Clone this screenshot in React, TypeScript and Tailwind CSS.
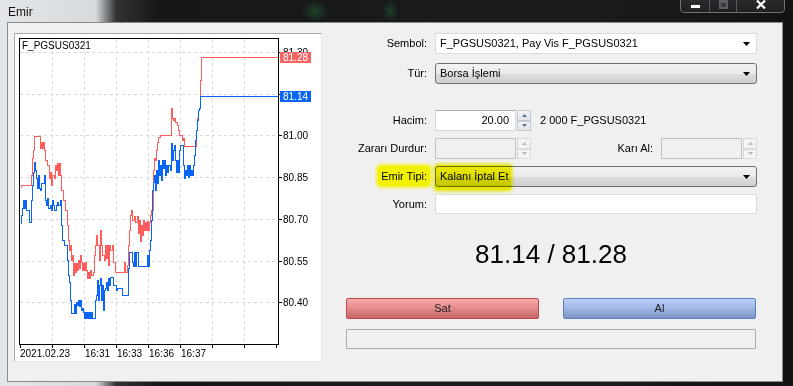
import React from 'react';

type Pt = [number, number];

// ask (red) and bid (blue) tick series, in page pixels of the chart panel
const ASK: Pt[] = [
  [20, 187], [21, 185], [31, 185], [31, 175], [32, 158], [33, 150], [34, 136], [40, 136], [40, 148], [41, 142],
  [42, 148], [43, 142], [44, 150], [45, 160], [47, 165], [49, 178], [50, 172], [51, 185], [52, 175], [54, 178],
  [55, 165], [56, 170], [57, 163], [58, 175], [59, 163], [60, 175], [61, 190], [63, 200], [65, 210], [67, 225],
  [68, 240], [69, 250], [70, 245], [71, 260], [72, 255], [73, 275], [74, 263], [75, 272], [76, 263], [77, 270],
  [78, 260], [79, 268], [80, 255], [81, 262], [82, 270], [83, 263], [84, 270], [85, 262], [86, 270], [87, 278],
  [88, 272], [89, 278], [90, 270], [91, 275], [93, 272], [94, 255], [95, 245], [96, 235], [97, 245], [99, 260],
  [100, 230], [101, 245], [102, 255], [104, 260], [105, 245], [106, 258], [107, 245], [108, 265], [109, 245],
  [110, 250], [112, 245], [113, 262], [115, 272], [124, 272], [124, 262], [125, 272], [127, 265], [128, 245],
  [129, 230], [130, 215], [131, 210], [132, 220], [134, 216], [135, 222], [137, 216], [138, 233], [139, 220],
  [140, 241], [141, 225], [142, 235], [143, 220], [144, 230], [145, 222], [146, 230], [147, 221], [148, 230],
  [149, 222], [150, 215], [151, 210], [153, 170], [154, 158], [155, 160], [156, 150], [157, 142], [158, 137],
  [160, 135], [170, 135], [171, 108], [172, 118], [173, 120], [174, 118], [175, 122], [177, 125], [178, 130],
  [179, 135], [181, 135], [182, 140], [183, 138], [184, 146], [186, 146], [195, 146], [196, 130], [197, 118],
  [198, 110], [199, 108], [200, 80], [201, 57], [278, 57],
];

const BID: Pt[] = [
  [20, 223], [21, 215], [22, 208], [23, 200], [24, 208], [25, 200], [26, 210], [28, 210], [29, 222], [31, 222],
  [31, 200], [32, 185], [33, 172], [34, 162], [35, 170], [36, 178], [37, 188], [38, 175], [39, 188], [40, 190],
  [41, 183], [43, 183], [44, 175], [45, 200], [46, 205], [47, 198], [48, 208], [50, 205], [51, 210], [52, 200],
  [53, 205], [54, 210], [56, 205], [57, 202], [58, 205], [60, 200], [61, 225], [62, 240], [64, 245], [66, 245],
  [67, 260], [68, 275], [69, 282], [70, 300], [71, 313], [73, 313], [74, 304], [75, 313], [76, 302], [77, 305],
  [78, 300], [79, 306], [80, 300], [81, 310], [82, 308], [83, 312], [84, 318], [85, 312], [86, 318], [87, 312],
  [88, 318], [89, 312], [90, 318], [91, 312], [92, 318], [94, 318], [95, 300], [96, 295], [97, 280], [98, 300],
  [99, 285], [100, 278], [101, 300], [102, 285], [103, 310], [104, 290], [105, 288], [106, 282], [107, 290],
  [108, 278], [109, 285], [110, 277], [112, 277], [113, 285], [115, 285], [116, 290], [117, 288], [121, 288],
  [122, 295], [128, 295], [128, 268], [129, 252], [131, 252], [132, 262], [133, 266], [134, 252], [135, 266],
  [136, 252], [138, 266], [146, 266], [147, 255], [148, 266], [149, 250], [150, 240], [151, 220], [152, 190],
  [153, 182], [154, 175], [155, 190], [156, 170], [157, 183], [158, 160], [159, 175], [160, 165], [161, 180],
  [162, 160], [163, 168], [164, 160], [165, 175], [166, 165], [167, 172], [168, 165], [170, 170], [171, 143],
  [172, 160], [173, 150], [174, 145], [175, 160], [176, 172], [177, 160], [178, 172], [179, 150], [180, 145],
  [182, 145], [183, 165], [184, 178], [185, 170], [186, 175], [187, 165], [188, 177], [189, 165], [190, 175],
  [191, 170], [192, 175], [193, 165], [194, 155], [195, 140], [196, 130], [197, 120], [198, 110], [199, 108],
  [200, 96], [278, 96],
];

const stepPath = (pts: Pt[]) => {
  let d = `M${pts[0][0] + 0.5} ${pts[0][1] + 0.5}`;
  for (let i = 1; i < pts.length; i++) {
    d += `H${pts[i][0] + 0.5}V${pts[i][1] + 0.5}`;
  }
  return d;
};

const GRID_Y = [52, 94, 135, 177, 219, 261, 302];
const GRID_X = [52, 84, 116, 148, 180, 212, 244];
const PRICES: [string, number][] = [
  ['81.00', 135],
  ['80.85', 177],
  ['80.70', 219],
  ['80.55', 261],
  ['80.40', 302],
];
const TIMES: [string, number][] = [
  ['2021.02.23', 20],
  ['16:31', 85],
  ['16:33', 117],
  ['16:36', 149],
  ['16:37', 181],
];

const Chart: React.FC = () => (
  <svg width={306} height={327} viewBox="15 34 306 327" className="block">
    <g stroke="#d9d9d9" strokeDasharray="3 3" shapeRendering="crispEdges">
      {GRID_Y.map((y) => (
        <line key={y} x1={20} x2={278} y1={y + 0.5} y2={y + 0.5} />
      ))}
      {GRID_X.map((x) => (
        <line key={x} x1={x + 0.5} x2={x + 0.5} y1={39} y2={344} />
      ))}
    </g>
    <text x={22} y={49} fontSize={10} fontFamily="Liberation Sans, Arial, sans-serif" fill="#000">
      F_PGSUS0321
    </text>
    <path d={stepPath(ASK)} fill="none" stroke="#ff5c5c" strokeWidth={1} shapeRendering="crispEdges" />
    <path d={stepPath(BID)} fill="none" stroke="#0a64f5" strokeWidth={1} shapeRendering="crispEdges" />
    <rect x={19.5} y={38.5} width={259} height={306} fill="none" stroke="#000" shapeRendering="crispEdges" />
    <g stroke="#000" shapeRendering="crispEdges">
      {GRID_Y.map((y) => (
        <line key={y} x1={278} x2={282} y1={y + 0.5} y2={y + 0.5} />
      ))}
      {[20, ...GRID_X, 276].map((x) => (
        <line key={x} x1={x + 0.5} x2={x + 0.5} y1={344} y2={348} />
      ))}
    </g>
    <g fontSize={10} fontFamily="Liberation Sans, Arial, sans-serif" fill="#000">
      <text x={283} y={56}>81.30</text>
      {PRICES.map(([t, y]) => (
        <text key={t} x={283} y={y + 4}>
          {t}
        </text>
      ))}
      {TIMES.map(([t, x]) => (
        <text key={t} x={x} y={357}>
          {t}
        </text>
      ))}
    </g>
    <rect x={280} y={52} width={31} height={11} fill="#f86464" />
    <rect x={280} y={91} width={31} height={11} fill="#0a64f5" />
    <g fontSize={10} fontFamily="Liberation Sans, Arial, sans-serif" fill="#fff">
      <text x={283} y={61}>81.28</text>
      <text x={283} y={100}>81.14</text>
    </g>
  </svg>
);

const Arrow: React.FC = () => (
  <svg width="7" height="4" viewBox="0 0 7 4">
    <path d="M0 0H7L3.5 4Z" fill="#000" />
  </svg>
);

const Spinner: React.FC<{ disabled?: boolean }> = ({ disabled }) => {
  const tri = disabled ? '#b9b9b9' : '#56708f';
  const half = disabled
    ? 'flex-1 flex items-center justify-center border border-[#d9d9d9] bg-[#f3f3f3]'
    : 'flex-1 flex items-center justify-center border border-[#c3cad3] bg-[linear-gradient(#f2f4f7,#dfe5ec)]';
  return (
    <div className="ml-[1px] flex h-[21px] w-[14px] flex-col">
      <div className={half}>
        <svg width="5" height="3" viewBox="0 0 5 3">
          <path d="M0 3H5L2.5 0Z" fill={tri} />
        </svg>
      </div>
      <div className={half}>
        <svg width="5" height="3" viewBox="0 0 5 3">
          <path d="M0 0H5L2.5 3Z" fill={tri} />
        </svg>
      </div>
    </div>
  );
};

const Row: React.FC<{ label: React.ReactNode; children: React.ReactNode; className?: string }> = ({
  label,
  children,
  className,
}) => (
  <div className={`flex items-center ${className ?? ''}`}>
    <div className="w-[113px] pr-[8px] text-right">{label}</div>
    <div className="flex w-[322px] items-center">{children}</div>
  </div>
);

const comboGray =
  'relative flex h-[21px] w-full items-center justify-between rounded-[3px] border border-[#707070] bg-[linear-gradient(#f2f2f2_0%,#ebebeb_50%,#dddddd_51%,#cfcfcf_100%)] pl-[4px] pr-[6px]';

const App: React.FC = () => {
  return (
    <div className="relative h-[386px] w-[793px] overflow-hidden bg-[linear-gradient(90deg,#e3e6e9_0px,#d6dadd_96px,#303234_116px,#161718_160px,#1b1c1d_560px,#121314_100%)] font-['Liberation_Sans',Arial,sans-serif] text-[11px] text-black">
      {/* title bar */}
      <div className="relative flex h-[22px] items-start justify-between">
        <span className="pl-[8px] pt-[3px] text-[12px] text-[#111]">Emir</span>
        <div className="pointer-events-none absolute left-[302px] top-0 h-[22px] w-[26px] bg-[radial-gradient(closest-side,rgba(40,170,70,0.3),transparent)]" />
        <div className="pointer-events-none absolute left-[382px] top-0 h-[22px] w-[16px] bg-[radial-gradient(closest-side,rgba(40,170,70,0.25),transparent)]" />
        <div className="mr-[8px] -mt-[4px] flex h-[17px] overflow-hidden rounded-b-[4px] border border-[#6f7276] bg-[linear-gradient(#2c2e31,#1d1f21)]">
          <div className="flex w-[29px] items-end justify-center border-r border-[#55585c] pb-[4px]">
            <div className="h-[3px] w-[9px] bg-white shadow-[0_0_1px_#999]" />
          </div>
          <div className="flex w-[27px] items-end justify-center border-r border-[#55585c] pb-[3px]">
            <div className="flex h-[10px] w-[9px] items-end justify-center bg-[#5c5f63] pb-[2px]">
              <div className="h-[4px] w-[5px] bg-[#3a3c3f]" />
            </div>
          </div>
          <div className="flex w-[47px] items-end justify-center pb-[3px]">
            <svg width="10" height="9" viewBox="0 0 10 9">
              <path d="M1 0.5L9 8.5M9 0.5L1 8.5" stroke="#fff" strokeWidth="2.2" />
            </svg>
          </div>
        </div>
      </div>

      {/* client area */}
      <div className="ml-[7px] flex h-[360px] w-[776px] border border-[#8a8a8a] bg-[#f0f0f0] pt-[10px]">
        <div className="ml-[6px] h-[329px] w-[308px] border border-[#a9a9a9] border-b-[#e6e6e6] border-r-[#e6e6e6] bg-white">
          <Chart />
        </div>

        <div className="flex w-[460px] flex-col">
          <Row label="Sembol:">
            <div className="flex h-[21px] w-full items-center justify-between border border-[#dcdcdc] bg-white pl-[4px] pr-[6px]">
              <span>F_PGSUS0321, Pay Vis F_PGSUS0321</span>
              <Arrow />
            </div>
          </Row>
          <Row label="Tür:" className="mt-[9px]">
            <div className={comboGray}>
              <span>Borsa İşlemi</span>
              <Arrow />
            </div>
          </Row>
          <Row label="Hacim:" className="mt-[26px]">
            <div className="flex h-[21px] w-[81px] items-center justify-end border border-[#d5d9df] border-t-[#abadb3] bg-white pr-[6px]">
              20.00
            </div>
            <Spinner />
            <span className="ml-[9px]">2 000 F_PGSUS0321</span>
          </Row>
          <Row label="Zararı Durdur:" className="mt-[7px]">
            <div className="h-[21px] w-[81px] border border-[#c2c2c2] bg-[#f0f0f0]" />
            <Spinner disabled />
            <div className="flex-1 pr-[8px] text-right">Karı Al:</div>
            <div className="h-[21px] w-[81px] border border-[#c2c2c2] bg-[#f0f0f0]" />
            <Spinner disabled />
          </Row>
          <Row
            label={
              <span className="-mr-[3px] rounded-[3px] bg-[#f2f200] px-[3px] py-[4px] shadow-[0_0_3px_2px_rgba(242,242,0,0.75)]">
                Emir Tipi:
              </span>
            }
            className="mt-[7px]"
          >
            <div className={comboGray}>
              <div className="pointer-events-none absolute -left-[1px] -top-[2px] h-[25px] w-[76px] rounded-[3px] bg-[#f4f400] mix-blend-multiply shadow-[0_0_3px_2px_rgba(244,244,0,0.7)]" />
              <span className="relative">Kalanı İptal Et</span>
              <Arrow />
            </div>
          </Row>
          <Row label="Yorum:" className="mt-[7px]">
            <div className="h-[20px] w-full border border-[#dcdcdc] bg-white" />
          </Row>

          <div className="ml-[24px] w-[410px]">
            <div className="mt-[25px] h-[30px] text-center text-[26px] leading-[30px]">81.14 / 81.28</div>
            <div className="mt-[29px] flex justify-between">
              <button className="flex h-[21px] w-[193px] items-center justify-center rounded-[2px] border border-[#c04a4a] bg-[linear-gradient(#f7a9a9,#e48a8a_50%,#c46666)] text-[11px] text-[#222]">
                Sat
              </button>
              <button className="flex h-[21px] w-[193px] items-center justify-center rounded-[2px] border border-[#5f7fbf] bg-[linear-gradient(#bcd1f8,#9fb5e4_50%,#7c92c4)] text-[11px] text-[#222]">
                Al
              </button>
            </div>
            <div className="mt-[10px] h-[20px] w-[410px] rounded-[1px] border border-[#adadad] bg-[#f0f0f0]" />
          </div>
        </div>
      </div>
    </div>
  );
};

export default App;
